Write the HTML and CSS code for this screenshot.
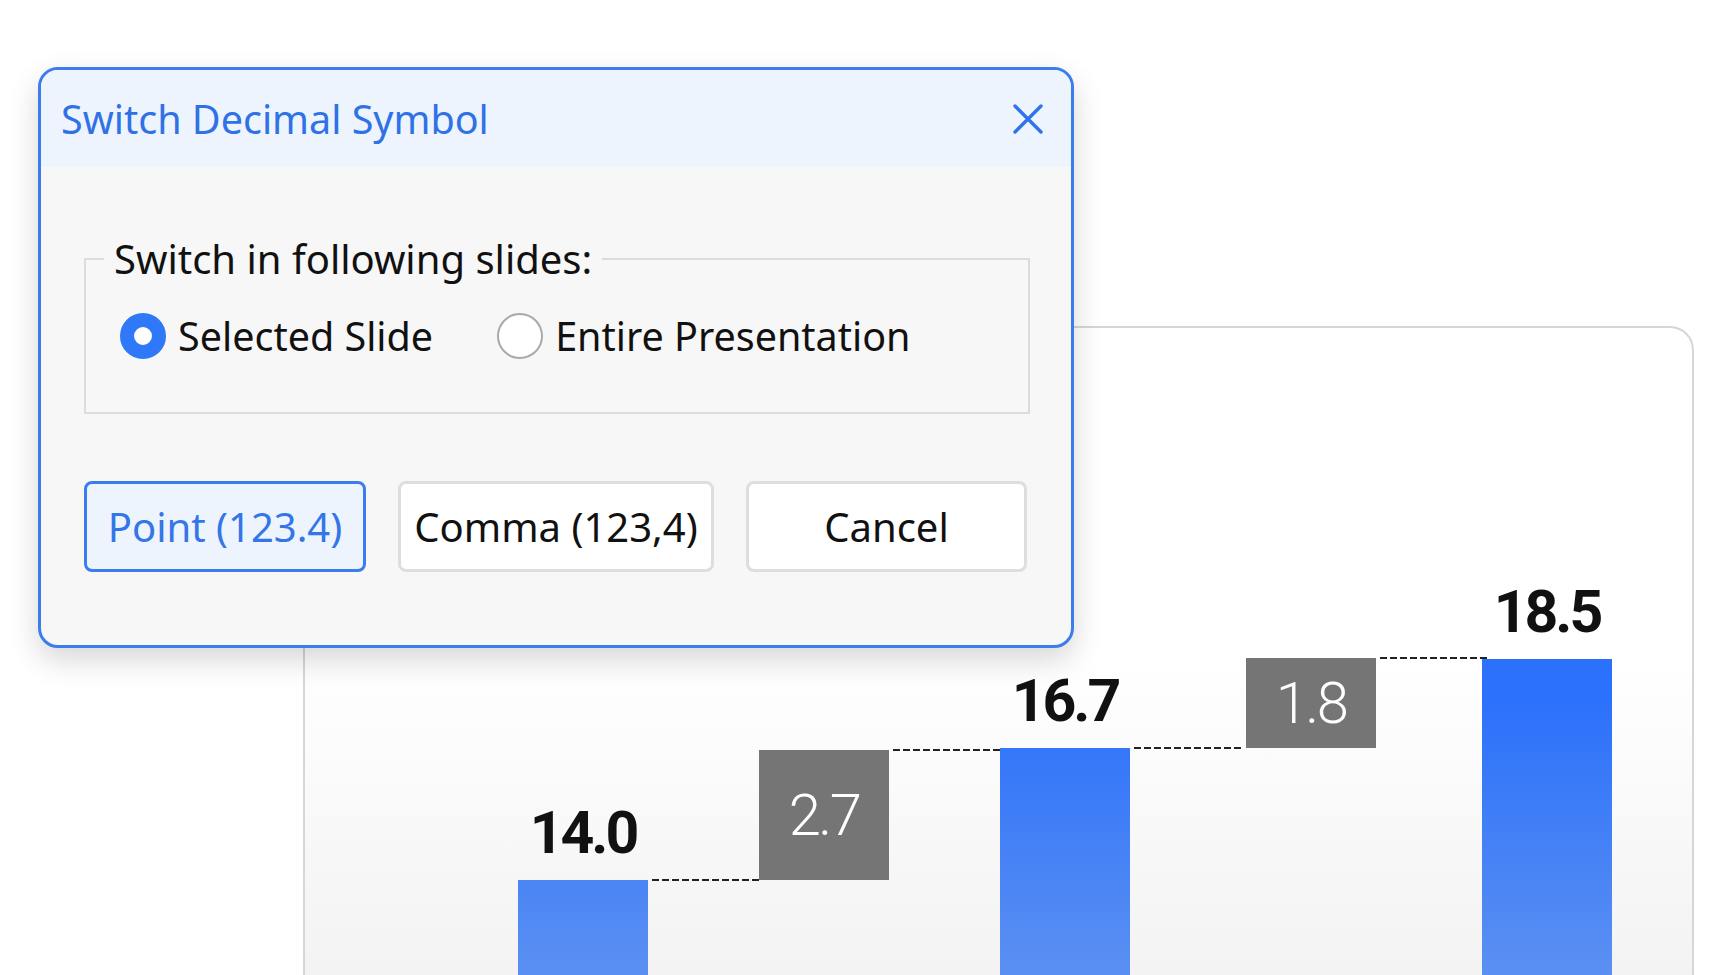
FILE: index.html
```html
<!DOCTYPE html>
<html lang="en">
<head>
  <meta charset="UTF-8">
  <meta name="viewport" content="width=device-width, initial-scale=1.0">
  <title>Switch Decimal Symbol</title>
  <link rel="stylesheet" href="styles.css">
</head>
<body>
  <!-- waterfall chart on the slide, 49px per unit -->
  <div class="chart-card">
    <div class="plot">
      <div class="col">
        <div class="value">14.0</div>
        <div class="bar" style="height: 685px"></div>
      </div>
      <div class="col">
        <div class="step" style="height: 130px; margin-bottom: 685px">2.7</div>
      </div>
      <div class="col">
        <div class="value">16.7</div>
        <div class="bar" style="height: 817px"></div>
      </div>
      <div class="col shift">
        <div class="step" style="height: 90px; margin-bottom: 817px">1.8</div>
      </div>
      <div class="col">
        <div class="value">18.5</div>
        <div class="bar last" style="height: 906px"></div>
      </div>
    </div>
  </div>

  <div class="dialog">
    <div class="dialog-header">
      <span class="dialog-title">Switch Decimal Symbol</span>
      <button type="button" class="close-btn" aria-label="Close">
        <svg width="32" height="32" viewBox="0 0 32 32">
          <path d="M3 3 L29 29 M29 3 L3 29" stroke="#2f74ec" stroke-width="3.4" stroke-linecap="round" fill="none"/>
        </svg>
      </button>
    </div>
    <div class="dialog-body">
      <fieldset class="scope">
        <legend>Switch in following slides:</legend>
        <div class="radio-row">
          <label class="radio">
            <input type="radio" name="scope" checked>
            <span class="dot"></span>
            Selected Slide
          </label>
          <label class="radio">
            <input type="radio" name="scope">
            <span class="dot"></span>
            Entire Presentation
          </label>
        </div>
      </fieldset>
      <div class="actions">
        <button type="button" class="btn btn-primary">Point (123.4)</button>
        <button type="button" class="btn btn-comma">Comma (123,4)</button>
        <button type="button" class="btn btn-cancel">Cancel</button>
      </div>
    </div>
  </div>
</body>
</html>
```

FILE: styles.css
```css
/* Slide background with the decimal dialog on top */
html, body {
  height: 975px;
  overflow: hidden;
}
body {
  margin: 0;
  position: relative;
  background: #fff;
  font-family: "Noto Sans", "Open Sans", sans-serif;
}

/* chart card */
.chart-card {
  margin: 326px 0 0 303px;
  width: 1391px;
  box-sizing: border-box;
  border: 2px solid #d6d6d6;
  border-bottom: none;
  border-radius: 0 24px 0 0;
  background: linear-gradient(to bottom, #fff 0, #fff 330px, #f3f3f3 640px, #f3f3f3 100%);
}
.plot {
  height: 1237px;
  padding-left: 213px;
  display: flex;
  align-items: flex-end;
  gap: 111px;
}
.col {
  width: 130px;
  display: flex;
  flex-direction: column;
  align-items: center;
}
.col.shift {
  margin: 0 -5px 0 5px;
}
.value {
  font-family: Roboto, "Liberation Sans", sans-serif;
  font-weight: 700;
  font-size: 59px;
  letter-spacing: -3px;
  line-height: 1;
  color: #111;
  margin-bottom: 18px;
}
.bar, .step {
  width: 130px;
  position: relative;
}
.bar {
  background: linear-gradient(to bottom, #2c71fb 0, #2c71fb 700px, #5b90f2 975px) fixed;
}
.step {
  background: #757575;
  color: #fff;
  font-family: Roboto, "Liberation Sans", sans-serif;
  font-weight: 300;
  font-size: 58px;
  letter-spacing: -2.5px;
  display: flex;
  align-items: center;
  justify-content: center;
}
/* dashed connector to the next column */
.bar::after, .step::after {
  content: "";
  position: absolute;
  top: -1px;
  left: calc(100% + 4px);
  width: 107px;
  height: 2px;
  background: repeating-linear-gradient(to right, #222 0 7px, transparent 7px 10px);
}
.bar.last::after {
  display: none;
}

/* dialog */
.dialog {
  position: absolute;
  left: 38px;
  top: 67px;
  width: 1036px;
  box-sizing: border-box;
  border: 3px solid #3b7ded;
  border-radius: 20px;
  background: #f7f7f7;
  overflow: hidden;
  box-shadow: 0 12px 30px rgba(0, 0, 0, 0.16);
}
.dialog-header {
  height: 97px;
  background: #edf4fe;
  display: flex;
  align-items: center;
  justify-content: space-between;
  padding: 0 27px 0 20px;
}
.dialog-title {
  font-size: 39.5px;
  color: #2f72e6;
}
.close-btn {
  border: none;
  background: none;
  padding: 0;
  width: 32px;
  height: 32px;
  display: flex;
}
.dialog-body {
  padding: 68px 41px 73px 43px;
}
.scope {
  margin: 0;
  border: 2px solid #dcdcdc;
  padding: 29px 34px 52px;
}
.scope legend {
  font-size: 40px;
  color: #111;
  padding: 0 10px;
  margin-left: -16px;
  line-height: 48px;
}
.radio-row {
  display: flex;
  gap: 64px;
}
.radio {
  display: flex;
  align-items: center;
  gap: 12px;
  font-size: 39.5px;
  color: #111;
  line-height: 48px;
}
.radio input {
  display: none;
}
.dot {
  width: 46px;
  height: 46px;
  box-sizing: border-box;
  border-radius: 50%;
  border: 2px solid #a9a9a9;
  background: #fff;
}
.radio input:checked + .dot {
  border: 14px solid #2f78f7;
}
.actions {
  display: flex;
  gap: 32px;
  margin-top: 67px;
}
.btn {
  height: 91px;
  box-sizing: border-box;
  border: 3px solid #dedede;
  border-radius: 8px;
  background: #fff;
  font-family: inherit;
  font-size: 40px;
  color: #111;
  padding: 0;
}
.btn-primary {
  width: 282px;
  background: #edf4fe;
  border-color: #3b7ded;
  color: #3476e8;
}
.btn-comma {
  width: 316px;
}
.btn-cancel {
  width: 281px;
}
```
